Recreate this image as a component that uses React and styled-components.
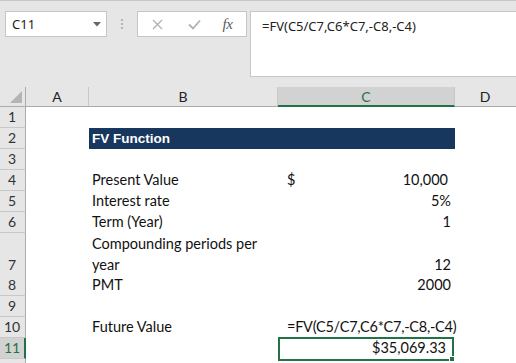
import React from "react";
import styled, { createGlobalStyle } from "styled-components";

const Global = createGlobalStyle`
  html, body { margin: 0; padding: 0; background: #ffffff; }
  body { width: 516px; height: 363px; overflow: hidden; font-family: Lato, "Liberation Sans", sans-serif; }
  * { box-sizing: border-box; }
`;

const Frame = styled.div`
  width: 516px;
  height: 363px;
  overflow: hidden;
  display: flex;
  flex-direction: column;
`;

const Toolbar = styled.div`
  display: flex;
  align-items: flex-start;
  height: 87px;
  flex: none;
  background: #e6e6e6;
  border-top: 1px solid #c6c6c6;
  padding: 10px 0 0 5px;
`;

const NameBox = styled.div`
  width: 102px;
  height: 26px;
  background: #fff;
  border: 1px solid #c6c6c6;
  display: flex;
  align-items: center;
  justify-content: space-between;
  padding: 0 5px 0 6px;
  font-family: "Noto Sans", "Open Sans", sans-serif;
  font-size: 13px;
  color: #222;
`;

const Separator = styled.div`
  width: 30px;
  height: 26px;
  display: flex;
  flex-direction: column;
  align-items: center;
  justify-content: center;
  gap: 2px;
`;

const Dot = styled.span`
  width: 2px;
  height: 2px;
  background: #b4b4b4;
`;

const FxBox = styled.div`
  width: 110px;
  height: 26px;
  background: #fff;
  border: 1px solid #c6c6c6;
  display: grid;
  grid-template-columns: 37px 37px 1fr;
  align-items: center;
  justify-items: center;
  padding-left: 1px;
`;

const FxText = styled.span`
  font-family: "Liberation Serif", "DejaVu Serif", serif;
  font-style: italic;
  font-size: 15px;
  color: #5a5a5a;
  letter-spacing: -0.5px;
  margin-right: 4px;
`;

const FormulaBar = styled.div`
  flex: 1;
  margin-left: 3px;
  height: 66px;
  background: #fff;
  border: 1px solid #c6c6c6;
  border-right: none;
  padding: 5px 0 0 11px;
  font-family: "Noto Sans", "Open Sans", sans-serif;
  font-size: 13px;
  color: #222;
`;

const COLS = "26px 63px 189px 177px 1fr";

const HeaderRow = styled.div`
  display: grid;
  grid-template-columns: ${COLS};
  height: 20px;
  flex: none;
  background: #e6e6e6;
  border-bottom: 1px solid #ababab;
`;

const Corner = styled.div`
  border-right: 1px solid #ababab;
  display: flex;
  align-items: flex-end;
  justify-content: flex-end;
  padding: 0 3px 3px 0;
`;

const ColHead = styled.div`
  display: flex;
  align-items: center;
  justify-content: center;
  font-family: Lato, "Liberation Sans", sans-serif;
  font-size: 14px;
  color: ${(p) => (p.$active ? "#217346" : "#222")};
  background: ${(p) => (p.$active ? "#d2d2d2" : "#e6e6e6")};
  border-right: 1px solid ${(p) => (p.$last ? "transparent" : "#c8c8c8")};
  border-bottom: ${(p) => (p.$active ? "2px solid #217346" : "none")};
  margin-bottom: ${(p) => (p.$active ? "-1px" : "0")};
  padding-top: ${(p) => (p.$active ? "1px" : "0")};
`;

const Row = styled.div`
  display: grid;
  grid-template-columns: ${COLS};
  height: ${(p) => p.$h || 21}px;
  flex: none;
`;

const RowHead = styled.div`
  background: ${(p) => (p.$active ? "#d2d2d2" : "#e6e6e6")};
  color: ${(p) => (p.$active ? "#217346" : "#333")};
  border-bottom: 1px solid #c8c8c8;
  border-right: ${(p) => (p.$active ? "2px solid #217346" : "1px solid #ababab")};
  display: flex;
  align-items: flex-end;
  justify-content: center;
  font-size: 14px;
  line-height: 20px;
  padding-right: ${(p) => (p.$active ? "0" : "1px")};
`;

const Cell = styled.div`
  position: relative;
  display: flex;
  align-items: flex-end;
  justify-content: ${(p) => p.$justify || "flex-start"};
  padding: 0 ${(p) => p.$pr || 0}px 1px ${(p) => p.$pl || 0}px;
  font-size: 14.5px;
  line-height: 20px;
  letter-spacing: ${(p) => (p.$tight ? "-0.25px" : "normal")};
  color: #111;
  white-space: nowrap;
  overflow: visible;
`;

const Wrapped = styled.div`
  white-space: normal;
  line-height: 21px;
`;

const Title = styled.div`
  grid-column: 3 / span 2;
  background: #17375e;
  color: #fff;
  font-family: "Liberation Sans", "DejaVu Sans", sans-serif;
  font-weight: 700;
  font-size: 13.5px;
  display: flex;
  align-items: flex-end;
  padding: 0 0 3px 3px;
`;

const Selection = styled.div`
  position: absolute;
  left: 0;
  top: -1px;
  right: 1px;
  bottom: -2px;
  border: 2px solid #217346;
  pointer-events: none;
`;

const Handle = styled.div`
  position: absolute;
  right: -3px;
  bottom: -3px;
  width: 6px;
  height: 6px;
  background: #217346;
  border: 1px solid #fff;
`;

const data = [
  { n: 4, label: "Present Value", dollar: true, value: "10,000", pr: 7 },
  { n: 5, label: "Interest rate", value: "5%" },
  { n: 6, label: "Term (Year)", value: "1" },
  { n: 7, label: "Compounding periods per year", value: "12", h: 42, wrap: true },
  { n: 8, label: "PMT", value: "2000" },
];

export default function App() {
  return (
    <Frame>
      <Global />
      <Toolbar>
        <NameBox>
          <span>C11</span>
          <svg width="8" height="5" viewBox="0 0 8 5">
            <path d="M0 0 L8 0 L4 4.5 Z" fill="#666" />
          </svg>
        </NameBox>
        <Separator>
          <Dot />
          <Dot />
          <Dot />
        </Separator>
        <FxBox>
          <svg width="11" height="11" viewBox="0 0 11 11">
            <path d="M1 1 L10 10 M10 1 L1 10" stroke="#b0b0b0" strokeWidth="1.3" fill="none" />
          </svg>
          <svg width="13" height="11" viewBox="0 0 13 11">
            <path d="M1 5.5 L5 9.5 L12 1.5" stroke="#b0b0b0" strokeWidth="1.8" fill="none" />
          </svg>
          <FxText>fx</FxText>
        </FxBox>
        <FormulaBar>=FV(C5/C7,C6*C7,-C8,-C4)</FormulaBar>
      </Toolbar>

      <HeaderRow>
        <Corner>
          <svg width="12" height="12" viewBox="0 0 12 12">
            <path d="M12 0 L12 12 L0 12 Z" fill="#b4b4b4" />
          </svg>
        </Corner>
        <ColHead>A</ColHead>
        <ColHead>B</ColHead>
        <ColHead $active>C</ColHead>
        <ColHead $last>D</ColHead>
      </HeaderRow>

      <Row>
        <RowHead>1</RowHead>
        <Cell />
        <Cell />
        <Cell />
        <Cell />
      </Row>
      <Row>
        <RowHead>2</RowHead>
        <Cell />
        <Title>FV Function</Title>
        <Cell />
      </Row>
      <Row>
        <RowHead>3</RowHead>
        <Cell />
        <Cell />
        <Cell />
        <Cell />
      </Row>
      {data.map((d) => (
        <Row key={d.n} $h={d.h}>
          <RowHead>{d.n}</RowHead>
          <Cell />
          <Cell $pl={3}>
            {d.wrap ? (
              <Wrapped>
                Compounding periods per
                <br />
                year
              </Wrapped>
            ) : (
              d.label
            )}
          </Cell>
          <Cell
            $justify={d.dollar ? "space-between" : "flex-end"}
            $pl={d.dollar ? 9 : 0}
            $pr={d.pr || 4}
          >
            {d.dollar && <span>$</span>}
            <span>{d.value}</span>
          </Cell>
          <Cell />
        </Row>
      ))}
      <Row>
        <RowHead>9</RowHead>
        <Cell />
        <Cell />
        <Cell />
        <Cell />
      </Row>
      <Row>
        <RowHead>10</RowHead>
        <Cell />
        <Cell $pl={3}>Future Value</Cell>
        <Cell $pl={9} $tight>
          =FV(C5/C7,C6*C7,-C8,-C4)
        </Cell>
        <Cell />
      </Row>
      <Row>
        <RowHead $active>11</RowHead>
        <Cell />
        <Cell />
        <Cell $justify="flex-end" $pr={9}>
          $35,069.33
          <Selection>
            <Handle />
          </Selection>
        </Cell>
        <Cell />
      </Row>
      <Row>
        <RowHead />
        <Cell />
        <Cell />
        <Cell />
        <Cell />
      </Row>
    </Frame>
  );
}
